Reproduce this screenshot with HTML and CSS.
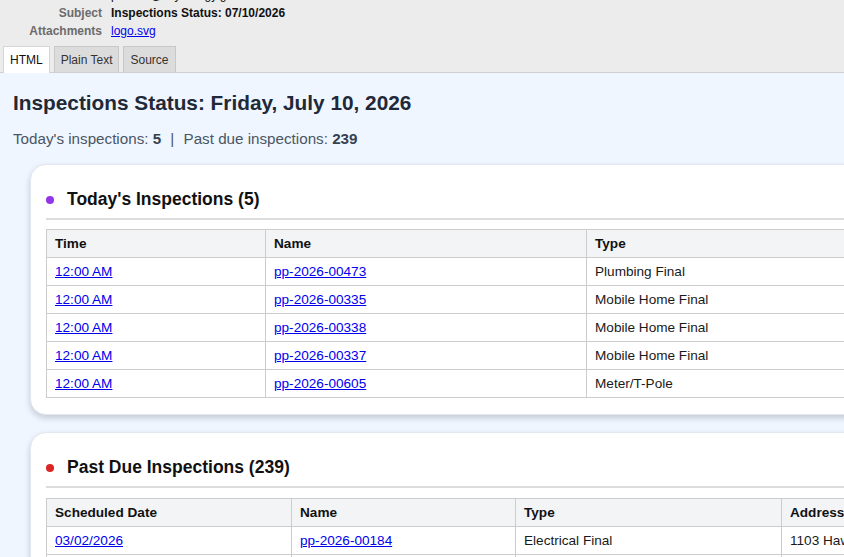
FILE: index.html
```html
<!DOCTYPE html>
<html>
<head>
<meta charset="utf-8">
<link rel="stylesheet" href="styles.css">
</head>
<body>
<div class="header">
  <div class="meta">
    <div class="row"><span class="label">To</span><span class="value plain">permits@cityenergy.gov</span></div>
    <div class="row"><span class="label">Subject</span><span class="value">Inspections Status: 07/10/2026</span></div>
    <div class="row"><span class="label">Attachments</span><span class="value plain"><a href="#">logo.svg</a></span></div>
  </div>
  <div class="tabs">
    <span class="tab active">HTML</span>
    <span class="tab">Plain Text</span>
    <span class="tab">Source</span>
  </div>
</div>
<div class="content">
  <h1 class="title">Inspections Status: Friday, July 10, 2026</h1>
  <p class="summary">Today's inspections: <b>5</b> <span class="sep">|</span> Past due inspections: <b>239</b></p>

  <section class="card">
    <h2 class="card-title"><span class="dot dot-purple"></span>Today's Inspections (5)</h2>
    <table class="grid">
      <thead>
        <tr><th class="c-time">Time</th><th class="c-name">Name</th><th>Type</th></tr>
      </thead>
      <tbody>
        <tr><td><a href="#">12:00 AM</a></td><td><a href="#">pp-2026-00473</a></td><td>Plumbing Final</td></tr>
        <tr><td><a href="#">12:00 AM</a></td><td><a href="#">pp-2026-00335</a></td><td>Mobile Home Final</td></tr>
        <tr><td><a href="#">12:00 AM</a></td><td><a href="#">pp-2026-00338</a></td><td>Mobile Home Final</td></tr>
        <tr><td><a href="#">12:00 AM</a></td><td><a href="#">pp-2026-00337</a></td><td>Mobile Home Final</td></tr>
        <tr><td><a href="#">12:00 AM</a></td><td><a href="#">pp-2026-00605</a></td><td>Meter/T-Pole</td></tr>
      </tbody>
    </table>
  </section>

  <section class="card">
    <h2 class="card-title"><span class="dot dot-red"></span>Past Due Inspections (239)</h2>
    <table class="grid">
      <thead>
        <tr><th class="c-date">Scheduled Date</th><th class="c-name2">Name</th><th class="c-type2">Type</th><th>Address</th></tr>
      </thead>
      <tbody>
        <tr><td><a href="#">03/02/2026</a></td><td><a href="#">pp-2026-00184</a></td><td>Electrical Final</td><td>1103 Hawthorne Rd</td></tr>
        <tr><td><a href="#">03/04/2026</a></td><td><a href="#">pp-2026-00191</a></td><td>Plumbing Final</td><td>220 Oak St</td></tr>
        <tr><td><a href="#">03/05/2026</a></td><td><a href="#">pp-2026-00202</a></td><td>Meter/T-Pole</td><td>48 Pine Ave</td></tr>
      </tbody>
    </table>
  </section>
</div>
</body>
</html>
```
FILE: styles.css
```css
html, body {
  margin: 0;
  padding: 0;
  height: 100%;
  overflow: hidden;
}
body {
  font-family: "Liberation Sans", Arial, sans-serif;
  background: #eff6ff;
  color: #111;
}
.header {
  background: #ececec;
  overflow: hidden;
}
.meta {
  margin-top: -14px;
  font-size: 12px;
}
.row {
  display: flex;
  height: 18px;
  align-items: center;
}
.label {
  width: 102px;
  text-align: right;
  color: #6b6b6b;
  font-weight: bold;
  flex: none;
}
.value {
  margin-left: 9px;
  font-weight: bold;
  color: #111;
}
.value.plain {
  font-weight: normal;
}
.value a {
  color: #0000ee;
}
.tabs {
  display: flex;
  gap: 4px;
  padding-left: 3px;
  margin-top: 6px;
  border-bottom: 1px solid #cfcfcf;
  height: 26px;
  align-items: flex-start;
}
.tab {
  box-sizing: border-box;
  height: 26px;
  padding: 1px 6px 0;
  display: flex;
  align-items: center;
  font-size: 12px;
  color: #333;
  background: #dcdcdc;
  border: 1px solid #c8c8c8;
  border-bottom: none;
}
.tab.active {
  background: #ffffff;
  height: 27px;
  padding-bottom: 1px;
  color: #111;
  border-color: #d6d6d6;
}
.content {
  padding: 18px 0 0 13px;
}
.title {
  margin: 0;
  font-size: 20.8px;
  line-height: 24px;
  color: #1f2937;
}
.summary {
  margin: 15px 0 0;
  font-size: 15.2px;
  line-height: 18px;
  color: #4b5563;
}
.summary b {
  color: #374151;
}
.sep {
  margin: 0 5px;
}
.card {
  box-sizing: border-box;
  width: 1100px;
  margin: 16px 0 0 17px;
  background: #fff;
  border: 1px solid #e3e8ee;
  border-radius: 16px;
  padding: 24px 16px 16px 15px;
  box-shadow: 0 3px 6px rgba(0, 0, 0, 0.18);
}
.card + .card {
  margin-top: 17px;
}
.card-title {
  margin: 0;
  font-size: 17.5px;
  line-height: 21px;
  color: #111;
  display: flex;
  align-items: center;
  padding-bottom: 8px;
  border-bottom: 2px solid #dcdcdc;
}
.dot {
  width: 8px;
  height: 8px;
  border-radius: 50%;
  margin-right: 13px;
  flex: none;
}
.dot-purple { background: #9333ea; }
.dot-red { background: #dc2626; }
.grid {
  margin-top: 9px;
  width: 100%;
  border-collapse: collapse;
  font-size: 13.6px;
  table-layout: fixed;
}
.card + .card .grid {
  margin-top: 10px;
}
.grid th, .grid td {
  border: 1px solid #cccccc;
  height: 27px;
  padding: 0 8px;
  text-align: left;
  white-space: nowrap;
  overflow: hidden;
}
.grid th {
  background: #f3f4f6;
  font-weight: bold;
  color: #111;
}
.grid td {
  color: #1a1a1a;
}
.grid a {
  color: #0000ee;
}
.c-time { width: 202px; }
.c-name { width: 304px; }
.c-date { width: 228px; }
.c-name2 { width: 207px; }
.c-type2 { width: 249px; }
```
